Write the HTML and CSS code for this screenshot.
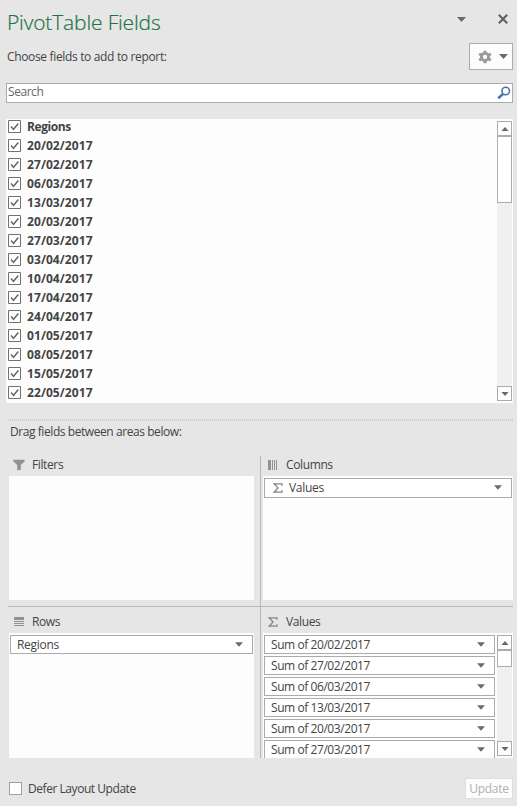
FILE: index.html
```html
<!DOCTYPE html>
<html lang="en">
<head>
<meta charset="utf-8">
<title>PivotTable Fields</title>
<link rel="stylesheet" href="styles.css">
</head>
<body>
<svg class="defs" aria-hidden="true">
  <symbol id="down" viewBox="0 0 9 5"><path d="M0 0h9L4.5 5z" fill="currentColor"/></symbol>
  <symbol id="up" viewBox="0 0 9 5"><path d="M0 5h9L4.5 0z" fill="currentColor"/></symbol>
  <symbol id="check" viewBox="0 0 13 13"><path d="M.5.5h12v12H.5z" fill="#fff" stroke="#707070"/><path d="M3 6.6l2.5 2.7L10.3 3.6" fill="none" stroke="#686868" stroke-width="1.5"/></symbol>
  <symbol id="sigma" viewBox="0 0 10 10"><path d="M9 2.8V.8H1.2L5 4.9 1.2 9.2H9V7.2" fill="none" stroke="#858585" stroke-width="1.3"/></symbol>
</svg>
<main class="pane">
  <header class="title-bar">
    <h1 class="title">PivotTable Fields</h1>
    <svg class="arrow title-arrow"><use href="#down"/></svg>
    <svg class="close" viewBox="0 0 10 10"><path d="M.8.8l8.4 8.4M9.2.8L.8 9.2" stroke="#606060" stroke-width="2.1"/></svg>
  </header>
  <div class="tools">
    <span class="choose">Choose fields to add to report:</span>
    <button class="gear-button">
      <svg class="gear" viewBox="0 0 14 14"><circle cx="7" cy="7" r="3.6" fill="none" stroke="#9a9a9a" stroke-width="2.9"/><path d="M7 .7v2.2M7 11.1v2.2M1.2 3.7l2 1.2M10.8 9.1l2 1.2M1.2 10.3l2-1.2M10.8 4.9l2-1.2" stroke="#9a9a9a" stroke-width="2.9"/></svg>
      <svg class="arrow"><use href="#down"/></svg>
    </button>
  </div>
  <div class="search">
    <span class="search-text">Search</span>
    <svg class="magnifier" viewBox="0 0 14 14"><circle cx="8.7" cy="5" r="3.8" fill="none" stroke="#4b73ad" stroke-width="1.6"/><path d="M6 8L1.2 12.2" stroke="#4b73ad" stroke-width="2.5"/></svg>
  </div>
  <section class="fields">
    <ul class="field-list">
      <li><svg><use href="#check"/></svg><span class="name">Regions</span></li>
      <li><svg><use href="#check"/></svg><span>20/02/2017</span></li>
      <li><svg><use href="#check"/></svg><span>27/02/2017</span></li>
      <li><svg><use href="#check"/></svg><span>06/03/2017</span></li>
      <li><svg><use href="#check"/></svg><span>13/03/2017</span></li>
      <li><svg><use href="#check"/></svg><span>20/03/2017</span></li>
      <li><svg><use href="#check"/></svg><span>27/03/2017</span></li>
      <li><svg><use href="#check"/></svg><span>03/04/2017</span></li>
      <li><svg><use href="#check"/></svg><span>10/04/2017</span></li>
      <li><svg><use href="#check"/></svg><span>17/04/2017</span></li>
      <li><svg><use href="#check"/></svg><span>24/04/2017</span></li>
      <li><svg><use href="#check"/></svg><span>01/05/2017</span></li>
      <li><svg><use href="#check"/></svg><span>08/05/2017</span></li>
      <li><svg><use href="#check"/></svg><span>15/05/2017</span></li>
      <li><svg><use href="#check"/></svg><span>22/05/2017</span></li>
    </ul>
    <div class="scrollbar">
      <div class="step"><svg class="arrow"><use href="#up"/></svg></div>
      <div class="thumb"></div>
      <div class="step last"><svg class="arrow"><use href="#down"/></svg></div>
    </div>
  </section>
  <div class="splitter"></div>
  <p class="drag">Drag fields between areas below:</p>
  <section class="areas">
    <div class="area top left">
      <h2><svg class="icon" viewBox="0 0 12 12"><path d="M.3.8h11.4v1.4L7.8 6v5L4.2 11.3V6L.3 2.2z" fill="#929292"/></svg><span>Filters</span></h2>
      <div class="drop"></div>
    </div>
    <div class="area top right">
      <h2><svg class="icon" viewBox="0 0 12 12"><path d="M1 1h3v10H1zM5 1h1v10H5zM7 1h1v10H7zM9 1h1v10H9z" fill="#929292"/></svg><span>Columns</span></h2>
      <div class="drop"><div class="chips">
        <div class="chip tall"><svg class="sigma"><use href="#sigma"/></svg><span>Values</span><svg class="arrow"><use href="#down"/></svg></div>
      </div></div>
    </div>
    <div class="area bottom left">
      <h2><svg class="icon" viewBox="0 0 12 12"><path d="M1 1h10v3H1zM1 5h10v1H1zM1 7h10v1H1zM1 9h10v1H1z" fill="#929292"/></svg><span>Rows</span></h2>
      <div class="drop"><div class="chips">
        <div class="chip"><span>Regions</span><svg class="arrow"><use href="#down"/></svg></div>
      </div></div>
    </div>
    <div class="area bottom right">
      <h2><svg class="sigma heading"><use href="#sigma"/></svg><span>Values</span></h2>
      <div class="drop">
        <div class="chips sums">
          <div class="chip"><span>Sum of 20/02/2017</span><svg class="arrow"><use href="#down"/></svg></div>
          <div class="chip"><span>Sum of 27/02/2017</span><svg class="arrow"><use href="#down"/></svg></div>
          <div class="chip"><span>Sum of 06/03/2017</span><svg class="arrow"><use href="#down"/></svg></div>
          <div class="chip"><span>Sum of 13/03/2017</span><svg class="arrow"><use href="#down"/></svg></div>
          <div class="chip"><span>Sum of 20/03/2017</span><svg class="arrow"><use href="#down"/></svg></div>
          <div class="chip"><span>Sum of 27/03/2017</span><svg class="arrow"><use href="#down"/></svg></div>
        </div>
        <div class="scrollbar">
          <div class="step"><svg class="arrow"><use href="#up"/></svg></div>
          <div class="thumb short"></div>
          <div class="step last"><svg class="arrow"><use href="#down"/></svg></div>
        </div>
      </div>
    </div>
  </section>
  <footer class="footer">
    <span class="box"></span><span class="defer">Defer Layout Update</span>
    <button class="update">Update</button>
  </footer>
</main>
</body>
</html>
```
FILE: styles.css
```css
* { box-sizing: border-box; }
body { margin: 0; background: #e6e6e6; color: #444; font: 12px/16px "Open Sans", "Noto Sans", sans-serif; }
svg { display: block; flex: none; }
span { white-space: nowrap; }
h1, h2, p, ul { margin: 0; padding: 0; font-weight: 400; }
button { font: inherit; }
.defs { display: none; }
.pane { width: 517px; height: 806px; overflow: hidden; padding: 0 4px 0 6px; }
.arrow { width: 9px; height: 5px; color: #6a6a6a; }

.title-bar { display: flex; height: 43px; align-items: flex-start; padding: 0 5px 0 1px; }
.title { flex: 1; padding-top: 8px; font-size: 21px; line-height: 28px; font-weight: 300; letter-spacing: -0.16px; color: #217346; -webkit-text-stroke: 0.2px #217346; }
.title-arrow { margin: 17px 32px 0 0; }
.close { width: 10px; height: 10px; margin-top: 14px; }

.tools { display: flex; height: 40px; justify-content: space-between; align-items: flex-start; }
.choose { padding: 6px 0 0 1px; letter-spacing: -0.34px; }
.gear-button { display: flex; align-items: center; gap: 7px; width: 44px; height: 27px; padding: 0 0 0 8px; border: 1px solid #ababab; background: #fdfdfd; color: inherit; }
.gear { width: 14px; height: 14px; }

.search { display: flex; justify-content: space-between; height: 20px; border: 1px solid #ababab; background: #fff; padding: 0 1px; }
.search-text { color: #666; letter-spacing: -0.45px; }
.magnifier { width: 14px; height: 14px; margin-top: 2px; }

.fields { display: flex; justify-content: space-between; height: 284px; margin-top: 16px; background: #fdfdfd; padding: 0 1px 0 2px; }
.field-list { list-style: none; font-weight: 700; letter-spacing: 0.08px; }
.field-list li { display: flex; align-items: center; height: 19px; gap: 6px; padding-bottom: 4px; }
.field-list svg { width: 13px; height: 13px; }
.name { letter-spacing: -0.42px; }

.scrollbar { display: flex; flex-direction: column; flex: none; width: 15px; margin: 2px 0; background: #f0f0f0; }
.step { display: flex; align-items: center; justify-content: center; height: 15px; border: 1px solid #ababab; background: #fdfdfd; }
.step .arrow { width: 8px; height: 4px; }
.thumb { height: 67px; border: 1px solid #ababab; background: #fff; }
.thumb.short { height: 17px; }
.last { margin-top: auto; }

.splitter { height: 2px; margin: 16px 0 0 2px; background: repeating-linear-gradient(90deg, #cfcfcf 0 1px, #e3e3e3 1px 2px); }
.drag { padding: 3px 0 0 4px; height: 35px; letter-spacing: -0.43px; }

.areas { display: grid; grid-template-columns: 253px 252px; grid-template-rows: 151px 151px; margin-left: 2px; }
.area { display: flex; flex-direction: column; }
.left { padding: 0 6px 0 1px; border-right: 1px solid #b8b8b8; }
.right { padding-left: 2px; }
.top { padding-bottom: 6px; border-bottom: 1px solid #b8b8b8; }
.area h2 { display: flex; align-items: center; flex: none; height: 20px; padding: 0 0 2px 4px; gap: 7px; font-size: 12px; letter-spacing: -0.38px; }
.area.bottom h2 { height: 26px; padding: 4px 0 0 4px; }
.icon { width: 12px; height: 12px; }
.drop { flex: 1; display: flex; min-height: 0; overflow: hidden; background: #fdfdfd; padding: 2px 1px; }
.bottom .drop { padding: 2px 1px 0; }
.chips { flex: 1; display: flex; flex-direction: column; gap: 2px; }
.chip { display: flex; align-items: center; flex: none; height: 19px; border: 1px solid #ababab; background: #fff; padding: 0 9px 0 6px; letter-spacing: -0.3px; }
.sums .chip { letter-spacing: -0.43px; }
.chip .arrow { width: 8px; margin: 0 0 1px auto; }
.tall { height: 20px; padding-left: 8px; }
.sigma { width: 10px; height: 10px; margin-right: 6px; }
.sigma.heading { margin: 0 1px; }
.drop .scrollbar { height: 121px; margin: 0 0 0 2px; }

.footer { display: flex; align-items: center; height: 21px; margin-top: 20px; padding-left: 3px; }
.box { width: 13px; height: 13px; border: 1px solid #a0a0a0; background: #fff; }
.defer { margin: 0 auto 0 6px; letter-spacing: -0.45px; }
.update { width: 48px; height: 21px; padding: 0; border: 1px solid #dedede; background: #fdfdfd; color: #b1b1b1; letter-spacing: -0.28px; }
```
